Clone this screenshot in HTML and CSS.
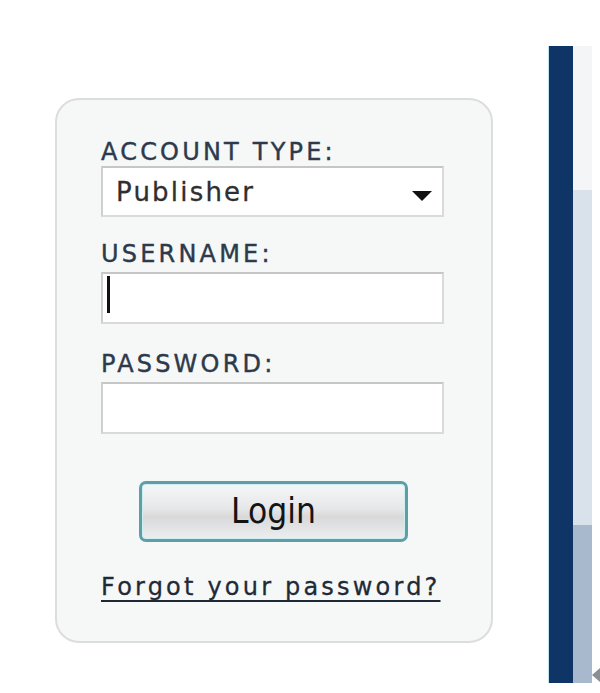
FILE: index.html
```html
<!DOCTYPE html>
<html lang="en">
<head>
    <meta charset="UTF-8">
    <title>Login</title>
    <link rel="stylesheet" href="styles.css">
</head>
<body>
    <div class="page">
        <form class="login-box">
            <label class="field-label" for="accountType">ACCOUNT TYPE:</label>
            <div class="select-wrap">
                <select id="accountType" class="select-input">
                    <option>Publisher</option>
                    <option>Advertiser</option>
                </select>
            </div>

            <label class="field-label label-gap" for="username">USERNAME:</label>
            <div class="input-wrap">
                <input type="text" id="username" class="text-input">
                <span class="caret"></span>
            </div>

            <label class="field-label label-gap password-label" for="password">PASSWORD:</label>
            <div class="input-wrap">
                <input type="password" id="password" class="text-input">
            </div>

            <button type="button" class="login-button">Login</button>

            <a href="#" class="forgot-link">Forgot your password?</a>
        </form>

        <div class="sidebar">
            <div class="sidebar-dark"></div>
            <div class="sidebar-strip">
                <div class="strip-top"></div>
                <div class="strip-mid"></div>
                <div class="strip-bottom"></div>
            </div>
            <span class="sidebar-arrow"></span>
        </div>
    </div>
</body>
</html>
```

FILE: styles.css
```css
 body {
     margin: 0;
     background: #ffffff;
     font-family: "DejaVu Sans", Verdana, sans-serif;
 }

.page {
     display: flex;
     align-items: flex-start;
     padding-left: 55px;
 }

.login-box {
     display: flex;
     flex-direction: column;
     width: 438px;
     height: 545px;
     margin-top: 98px;
     padding: 40px 0 0 44px;
     box-sizing: border-box;
     background: #f6f7f7;
     border: 2px solid #dcdddd;
     border-radius: 24px;
 }

.field-label {
     display: block;
     font-size: 24px;
     line-height: 24px;
     letter-spacing: 3.2px;
     color: #2c3a4b;
     -webkit-text-stroke: 0.4px #2c3a4b;
 }

.label-gap {
     margin-top: 25px;
 }

.password-label {
     margin-top: 28px;
 }

.select-wrap,
.input-wrap {
     position: relative;
     width: 343px;
 }

.select-wrap {
     margin-top: 2px;
 }

.input-wrap {
     margin-top: 6px;
 }

.select-input,
.text-input {
     display: block;
     width: 100%;
     height: 51px;
     margin: 0;
     box-sizing: border-box;
     background: #ffffff;
     border: 2px solid #dadada;
     border-top-color: #c6c6c6;
     border-left-color: #cfcfcf;
     border-radius: 0;
     outline: none;
 }

.text-input {
     height: 52px;
 }

.select-input {
     appearance: none;
     -webkit-appearance: none;
     padding: 0 0 0 13px;
     font-family: "DejaVu Sans", Verdana, sans-serif;
     font-size: 26px;
     letter-spacing: 2.2px;
     color: #2f2f2f;
     -webkit-text-stroke: 0.3px #2f2f2f;
 }

 /* the select arrow */
.select-wrap::after {
     content: "";
     position: absolute;
     right: 12px;
     top: 25px;
     border-left: 10px solid transparent;
     border-right: 10px solid transparent;
     border-top: 10px solid #111111;
 }

.caret {
     position: absolute;
     left: 6px;
     top: 4px;
     width: 3px;
     height: 37px;
     background: #111111;
 }

.login-button {
     align-self: flex-start;
     width: 269px;
     height: 61px;
     margin: 47px 0 0 38px;
     padding: 0 0 2px;
     font-family: "DejaVu Sans Condensed", "DejaVu Sans", sans-serif;
     font-size: 35px;
     color: #141414;
     background: linear-gradient(#f4f7f8 0%, #e6e7e8 45%, #d9d9da 60%, #eceeef 100%);
     border: 3px solid #5e9ea4;
     border-radius: 7px;
     box-shadow: inset 0 0 0 1px #cfeef2;
     cursor: pointer;
 }

.forgot-link {
     align-self: flex-start;
     margin-top: 33px;
     font-size: 24px;
     line-height: 24px;
     letter-spacing: 3.2px;
     color: #1f2a38;
     -webkit-text-stroke: 0.3px #1f2a38;
     text-decoration: underline;
     text-decoration-thickness: 2px;
     text-underline-offset: 5px;
 }

.sidebar {
     position: relative;
     display: flex;
     height: 637px;
     margin: 46px 0 0 55px;
 }

.sidebar-dark {
     width: 25px;
     background: #0f3566;
     border-left: 1px solid #bfe3ea;
     box-sizing: border-box;
 }

.sidebar-strip {
     display: flex;
     flex-direction: column;
     width: 19px;
 }

.strip-top {
     height: 144px;
     background: #f3f5f7;
 }

.strip-mid {
     height: 335px;
     background: #d9e1ea;
 }

.strip-bottom {
     flex: 1;
     background: #a8b9cd;
 }

.sidebar-arrow {
     position: absolute;
     left: 44px;
     top: 622px;
     border-top: 7px solid transparent;
     border-bottom: 7px solid transparent;
     border-right: 8px solid #8a8f96;
 }
```
